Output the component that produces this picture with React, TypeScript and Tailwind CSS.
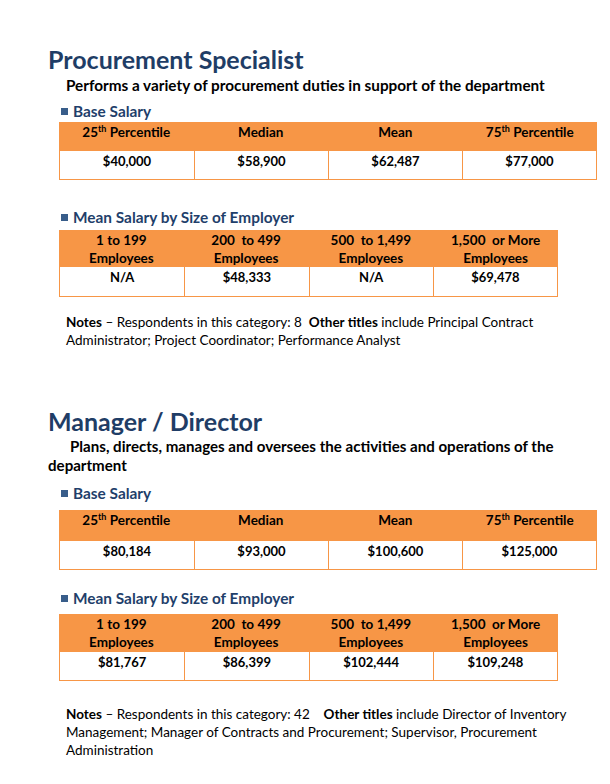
import React from "react";

const font = { fontFamily: "Lato, 'Open Sans', sans-serif" };

function Th() {
    return <sup className="text-[9px] font-bold relative -top-[5px]">th</sup>;
}

function SectionLabel({ text, className }: { text: string; className?: string }) {
    return (
        <div className={"flex items-center ml-[13px] h-[18px] " + (className ?? "")}>
            <span className="w-[7px] h-[7px] bg-[#385D8A] mr-[5px]" />
            <span className="text-[15.4px] font-bold text-[#1F3F6B] leading-[18px]">
                {text}
            </span>
        </div>
    );
}

function SalaryTable({
    headers,
    values,
    width,
    headHeight,
    rowHeight,
    className,
}: {
    headers: React.ReactNode[];
    values: string[];
    width: string;
    headHeight: string;
    rowHeight: string;
    className?: string;
}) {
    return (
        <div className={"ml-[11px] " + width + " " + (className ?? "")}>
            <div className={"grid grid-cols-4 bg-[#F79646] " + headHeight}>
                {headers.map((h, i) => (
                    <div
                        key={i}
                        className="text-center font-bold text-[13.5px] leading-[18px] pt-[1px] text-black"
                    >
                        {h}
                    </div>
                ))}
            </div>
            <div
                className={
                    "grid grid-cols-4 border-x border-b border-[#F79646] " + rowHeight
                }
            >
                {values.map((v, i) => (
                    <div
                        key={i}
                        className={
                            "text-center font-bold text-[13px] leading-[18px] pt-[1px] text-black " +
                            (i > 0 ? "border-l border-[#F79646]" : "")
                        }
                    >
                        {v}
                    </div>
                ))}
            </div>
        </div>
    );
}

const percentileHeaders = [
    <>
        25<Th /> Percentile
    </>,
    "Median",
    "Mean",
    <>
        75<Th /> Percentile
    </>,
];

const sizeHeaders = [
    <>
        1 to 199
        <br />
        Employees
    </>,
    <>
        200&nbsp; to 499
        <br />
        Employees
    </>,
    <>
        500&nbsp; to 1,499
        <br />
        Employees
    </>,
    <>
        1,500&nbsp; or More
        <br />
        Employees
    </>,
];

export default function App() {
    return (
        <div className="bg-white min-h-[784px] w-[610px] pl-[48px] pt-[44px] text-black" style={font}>
            {/* Procurement Specialist */}
            <h1 className="text-[25px] font-bold leading-[30px] text-[#1F3D66]">
                Procurement Specialist
            </h1>
            <p className="mt-[1px] ml-[18px] text-[15.3px] font-bold leading-[20px]">
                Performs a variety of procurement duties in support of the department
            </p>
            <SectionLabel text="Base Salary" className="mt-[7px]" />
            <SalaryTable
                className="mt-[2px]"
                width="w-[538px]"
                headHeight="h-[29px]"
                rowHeight="h-[29px]"
                headers={percentileHeaders}
                values={["$40,000", "$58,900", "$62,487", "$77,000"]}
            />
            <SectionLabel text="Mean Salary by Size of Employer" className="mt-[28px]" />
            <SalaryTable
                className="mt-[4px]"
                width="w-[499px]"
                headHeight="h-[37px]"
                rowHeight="h-[30px]"
                headers={sizeHeaders}
                values={["N/A", "$48,333", "N/A", "$69,478"]}
            />
            <p className="mt-[16px] ml-[18px] text-[13.5px] leading-[18px] whitespace-pre">
                <b>Notes</b> – Respondents in this category: 8  <b>Other titles</b> include Principal Contract
                {"\n"}Administrator; Project Coordinator; Performance Analyst
            </p>

            {/* Manager / Director */}
            <h1 className="mt-[57px] text-[25px] font-bold leading-[30px] text-[#1F3D66]">
                Manager / Director
            </h1>
            <p className="mt-[1px] text-[15.1px] font-bold leading-[19px] indent-[22px]">
                Plans, directs, manages and oversees the activities and operations of the
                <br />
                department
            </p>
            <SectionLabel text="Base Salary" className="mt-[9px]" />
            <SalaryTable
                className="mt-[8px]"
                width="w-[538px]"
                headHeight="h-[31px]"
                rowHeight="h-[29px]"
                headers={percentileHeaders}
                values={["$80,184", "$93,000", "$100,600", "$125,000"]}
            />
            <SectionLabel text="Mean Salary by Size of Employer" className="mt-[19px]" />
            <SalaryTable
                className="mt-[7px]"
                width="w-[499px]"
                headHeight="h-[38px]"
                rowHeight="h-[29px]"
                headers={sizeHeaders}
                values={["$81,767", "$86,399", "$102,444", "$109,248"]}
            />
            <p className="mt-[24px] ml-[18px] text-[13.5px] leading-[18px] whitespace-pre">
                <b>Notes</b> – Respondents in this category: 42    <b>Other titles</b> include Director of Inventory
                {"\n"}Management; Manager of Contracts and Procurement; Supervisor, Procurement
                {"\n"}Administration
            </p>
        </div>
    );
}
